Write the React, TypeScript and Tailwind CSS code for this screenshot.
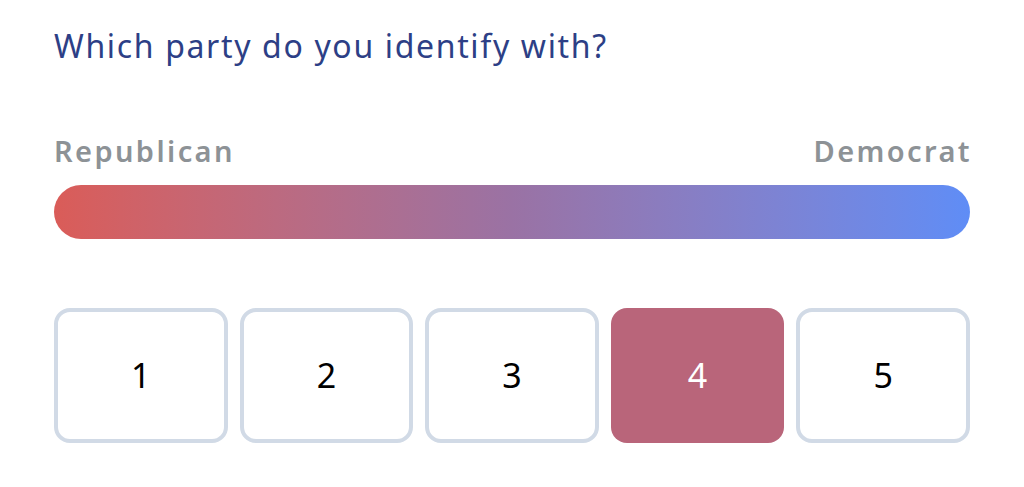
import { useState } from "react";

const OPTIONS = [1, 2, 3, 4, 5];

export default function App() {
  const [selected, setSelected] = useState(4);

  return (
    <div
      className="w-[1024px] h-[487px] bg-white px-[54px] pt-[26px]"
      style={{ fontFamily: '"Noto Sans", "Liberation Sans", sans-serif' }}
    >
      {/* 问题标题 */}
      <h1 className="text-[32px] leading-[40px] text-[#2d3f86] font-normal tracking-[1.65px]">
        Which party do you identify with?
      </h1>

      {/* 两端标签 */}
      <div className="mt-[68px] flex justify-between text-[29px] leading-[34px] font-semibold text-[#8d9296] tracking-[2.4px]">
        <span>Republican</span>
        <span className="-mr-[2px]">Democrat</span>
      </div>

      {/* 渐变条 */}
      <div className="mt-[17px] h-[54px] rounded-full bg-gradient-to-r from-[#da5c58] via-[#9a72a4] to-[#5f8df6]" />

      {/* 选项按钮 */}
      <div className="mt-[69px] grid grid-cols-5 gap-[12px]">
        {OPTIONS.map((n) => (
          <button
            key={n}
            onClick={() => setSelected(n)}
            className={
              n === selected
                ? "h-[135px] rounded-[16px] bg-[#b9657a] text-white text-[34px]"
                : "h-[135px] rounded-[16px] border-[4px] border-[#d1dae6] bg-white text-black text-[34px]"
            }
          >
            {n}
          </button>
        ))}
      </div>
    </div>
  );
}
